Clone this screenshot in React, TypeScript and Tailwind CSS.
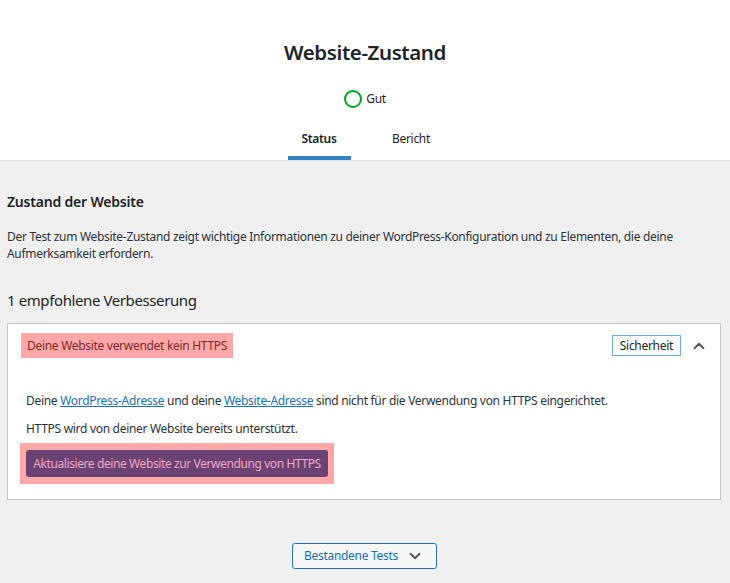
import React from 'react';
import { ChevronUp, ChevronDown } from 'lucide-react';

const font = { fontFamily: '"Noto Sans", "Open Sans", sans-serif' };

const Tab: React.FC<{ label: string; active?: boolean }> = ({ label, active }) => (
  <div
    className={`w-[63px] text-center pt-[10px] pb-[7px] text-[12px] leading-[20px] border-b-4 ${
      active ? 'border-[#3582c4] font-semibold text-[#1d2327]' : 'border-transparent text-[#1d2327]'
    }`}
  >
    {label}
  </div>
);

const App: React.FC = () => {
  return (
    <div className="min-h-screen bg-[#f0f0f1] text-[#1d2327] tracking-[-0.3px]" style={font}>
      <header className="bg-white border-b border-[#dcdcde] flex flex-col items-center">
        <h1 className="pt-[38px] text-[20.5px] leading-[29px] font-semibold tracking-[-0.4px] text-[#1d2327]">
          Website-Zustand
        </h1>
        <div className="mt-[22px] flex items-center gap-[4px] h-[20px]">
          <span className="w-[18px] h-[18px] rounded-full border-2 border-[#00a32a]" />
          <span className="text-[12px] text-[#1d2327]">Gut</span>
        </div>
        <nav className="mt-[10px] flex gap-[29px]">
          <Tab label="Status" active />
          <Tab label="Bericht" />
        </nav>
      </header>

      <main className="pl-[7px] pr-[9px] pb-[14px]">
        <h2 className="mt-[31px] text-[14px] leading-[20px] font-semibold tracking-[-0.2px]">Zustand der Website</h2>
        <p className="mt-[16px] text-[12px] leading-[17px] text-[#2c3338]">
          Der Test zum Website-Zustand zeigt wichtige Informationen zu deiner WordPress-Konfiguration und zu Elementen, die deine Aufmerksamkeit erfordern.
        </p>

        <h3 className="mt-[26px] text-[15px] leading-[24px] font-normal tracking-[-0.4px]">1 empfohlene Verbesserung</h3>

        <section className="mt-[11px] bg-white border border-[#c3c4c7]">
          <div className="flex items-center pl-[13px] pr-[11px] pt-[9px]">
            <span className="h-[25px] px-[6px] flex items-center bg-[#ffa8a8] text-[12px] text-[#7e2a2a]">
              Deine Website verwendet kein HTTPS
            </span>
            <span className="ml-auto h-[21px] px-[7px] flex items-center border border-[#72aee6] text-[12px] text-[#1d2327]">
              Sicherheit
            </span>
            <span className="ml-[8px] w-[20px] h-[20px] flex items-center justify-center">
              <ChevronUp className="w-[18px] h-[18px] text-[#50575e]" strokeWidth={2.4} />
            </span>
          </div>

          <div className="pl-[18px] pr-[18px] pt-[33px] pb-[15px] text-[12px] leading-[20px] text-[#2c3338]">
            <p>
              Deine <a className="text-[#2271b1] underline">WordPress-Adresse</a> und deine{' '}
              <a className="text-[#2271b1] underline">Website-Adresse</a> sind nicht für die Verwendung von HTTPS eingerichtet.
            </p>
            <p className="mt-[8px]">HTTPS wird von deiner Website bereits unterstützt.</p>
            <div className="mt-[4px] -ml-[6px] inline-block bg-[#ffa8a8] px-[6px] py-[7px]">
              <button className="h-[27px] w-[302px] rounded-[3px] bg-[#6a4374] text-[12px] tracking-[-0.4px] text-[#f1a7c4]">
                Aktualisiere deine Website zur Verwendung von HTTPS
              </button>
            </div>
          </div>
        </section>

        <div className="mt-[43px] flex justify-center">
          <button className="h-[26px] w-[145px] flex items-center justify-center gap-[8px] rounded-[3px] border border-[#2271b1] bg-[#f6f7f7] text-[12px] text-[#2271b1]">
            Bestandene Tests
            <ChevronDown className="w-[18px] h-[18px] text-[#50575e]" strokeWidth={2.4} />
          </button>
        </div>
      </main>
    </div>
  );
};

export default App;
